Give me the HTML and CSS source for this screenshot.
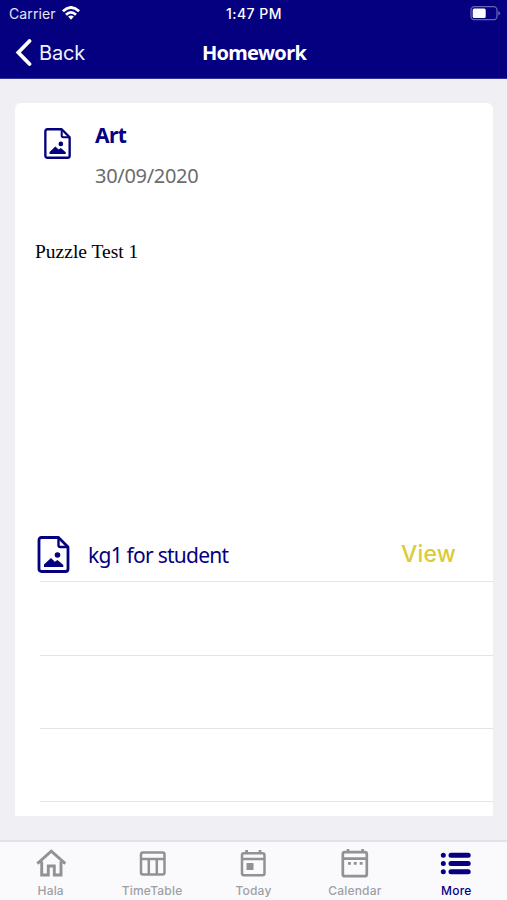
FILE: index.html
```html
<!DOCTYPE html>
<html lang="en">
<head>
<meta charset="utf-8">
<title>Homework</title>
<link rel="stylesheet" href="styles.css">
</head>
<body>
<svg class="defs" width="0" height="0">
  <symbol id="picture-file" viewBox="0 0 32 37">
    <path d="M4 1.5H21L30.5 11V33Q30.5 35.5 28 35.5H4Q1.5 35.5 1.5 33V4Q1.5 1.5 4 1.5Z" fill="none" stroke="currentColor" stroke-width="2.8" stroke-linejoin="round"/>
    <path d="M21 2V9Q21 11 23 11H30" fill="none" stroke="currentColor" stroke-width="2.4"/>
    <circle cx="20" cy="19" r="2.8" fill="currentColor"/>
    <path d="M6.5 31V28.5L13.5 22L17.3 25.8L20 24L25.8 29V31Z" fill="currentColor"/>
  </symbol>
</svg>
<header class="header">
  <div class="status">
    <div class="carrier"><span>Carrier</span>
      <svg width="18" height="14" viewBox="0 0 18 14" fill="none" stroke="#fff" stroke-width="2.8"><path d="M.9 5.2Q9-2.3 17.1 5.2M4 8.7Q9 4 14 8.7"/><path d="M6.1 10.6Q9 8.2 11.9 10.6L9 13.7Z" fill="#fff" stroke="none"/></svg>
    </div>
    <span class="time">1:47 PM</span>
    <svg class="battery" width="31" height="15" viewBox="0 0 31 15"><rect x="1" y=".7" width="26" height="13" rx="3.5" fill="none" stroke="#6563b5" stroke-width="1.3"/><rect x="2.7" y="2.6" width="13" height="9.3" rx="1.5" fill="#fff"/><path d="M28.3 5Q32 7.2 28.3 9.5Z" fill="#6563b5"/></svg>
  </div>
  <nav class="navbar">
    <a class="back"><svg width="17" height="27" viewBox="0 0 17 27"><path d="M14.5 2L3.3 13.5L14.5 25" fill="none" stroke="#fff" stroke-width="3.8" stroke-linecap="round"/></svg><span>Back</span></a>
    <h1>Homework</h1>
    <span></span>
  </nav>
</header>
<main class="content">
  <article class="card">
    <div class="subject">
      <svg class="subject-icon"><use href="#picture-file"/></svg>
      <div><h2>Art</h2><time>30/09/2020</time></div>
    </div>
    <div class="description">Puzzle Test 1</div>
    <div class="row attachment">
      <svg class="file-icon"><use href="#picture-file"/></svg>
      <span class="file-name">kg1 for student</span>
      <a class="view">View</a>
    </div>
    <div class="row"></div>
    <div class="row"></div>
    <div class="row"></div>
  </article>
</main>
<nav class="tabs">
  <a class="tab"><svg width="32" height="32" viewBox="0 0 32 32" fill="none" stroke="currentColor" stroke-width="2.9"><path d="M2.3 16.6L16.3 4.2L30.3 16.6M6.7 14.5V28H13.3V19H19.3V28H26V14.5"/></svg><span>Hala</span></a>
  <a class="tab"><svg width="32" height="32" viewBox="0 0 32 32" fill="none" stroke="currentColor" stroke-width="2.5"><rect x="5" y="5.5" width="23.5" height="22" rx="2"/><path d="M5 12H28M12.8 12V27M20.8 12V27"/></svg><span>TimeTable</span></a>
  <a class="tab"><svg width="32" height="32" viewBox="0 0 32 32" fill="none" stroke="currentColor" stroke-width="2.5"><rect x="5" y="6.2" width="22.5" height="22" rx="2"/><path d="M5 12H27" stroke-width="2.5"/><path d="M9.6 3V7M23 3V7" stroke-width="2.8"/><rect x="9.5" y="16" width="7" height="7" fill="currentColor" stroke="none"/></svg><span>Today</span></a>
  <a class="tab"><svg width="32" height="32" viewBox="0 0 32 32" fill="none" stroke="currentColor" stroke-width="2.7"><rect x="3.8" y="5.2" width="24" height="24" rx="2"/><path d="M4 11.6H28M9 2V6M23.6 2V6"/><path d="M9 16.4H11.9M14.8 16.4H17.7M20.7 16.4H23.6"/></svg><span>Calendar</span></a>
  <a class="tab active"><svg width="32" height="32" viewBox="0 0 32 32" fill="none" stroke="currentColor" stroke-width="5" stroke-linecap="round"><path d="M3.3 8.2H3.31M3.3 16.5H3.31M3.3 24.7H3.31M11 8.2H28.2M11 16.5H28.2M11 24.7H28.2"/></svg><span>More</span></a>
</nav>
</body>
</html>
```
FILE: styles.css
```css
* { box-sizing: border-box; }
body {
  margin: 0;
  height: 900px;
  display: flex;
  flex-direction: column;
  overflow: hidden;
  background: #efeff4;
  font-family: Inter, "Liberation Sans", sans-serif;
  color: #04007f;
}
.defs { position: absolute; }
svg { flex: none; display: block; }
h1, h2 { margin: 0; font-family: "Noto Sans", sans-serif; font-weight: 700; }
.header {
  height: 79px;
  background: #04007f;
  border-bottom: 1px solid #34319a;
  color: #fff;
}
.status {
  height: 27px;
  display: grid;
  grid-template-columns: 1fr auto 1fr;
  align-items: center;
  padding: 0 6px 0 7px;
  font-size: 14px;
  line-height: 27px;
}
.carrier { display: flex; align-items: center; gap: 6px; padding-left: 2px; color: #e6e5f5; letter-spacing: .1px; }
.carrier svg { margin-top: -1px; }
.time { font-weight: 500; letter-spacing: .5px; }
.battery { justify-self: end; }
.navbar {
  height: 51px;
  display: grid;
  grid-template-columns: 1fr auto 1fr;
  align-items: center;
  padding: 0 14px 0 15px;
}
.back { display: flex; align-items: center; gap: 7px; font-size: 20px; letter-spacing: -.2px; color: #f2f1fb; }
h1 { font-size: 20px; line-height: 30px; letter-spacing: -.7px; }
.content { height: 761px; padding: 24px 14px 0 15px; }
.card {
  height: 713px;
  background: #fff;
  border-radius: 6px 6px 0 0;
  display: flex;
  flex-direction: column;
}
.subject { display: flex; height: 128px; padding: 17px 0 0 29px; }
.subject-icon { width: 27px; height: 31px; margin: 8px 24px 0 0; }
h2 { font-size: 21px; line-height: 31px; letter-spacing: -.6px; }
.subject time { display: block; margin-top: 9px; color: #6c6c6c; font: 20px/31px "Noto Sans", sans-serif; letter-spacing: -.3px; }
.description {
  height: 278px;
  padding: 8px 20px;
  font: 19.5px/25px "Liberation Serif", serif;
  color: #000;
}
.row { height: 73px; flex: none; margin-left: 25px; border-bottom: 1px solid #e4e4e6; }
.attachment { height: 74px; margin-top: -1px; display: flex; align-items: center; padding: 19px 37px 0 0; }
.attachment + .row { height: 74px; }
.file-icon { width: 33px; height: 37px; margin-left: -3px; margin-right: 18px; }
.file-name { flex: 1; padding-top: 2px; font: 21px/30px "Noto Sans", sans-serif; letter-spacing: -.75px; }
.view { color: #dccb35; font-size: 23px; font-weight: 500; letter-spacing: .2px; }
.tabs {
  height: 60px;
  display: grid;
  grid-template-columns: repeat(5, 1fr);
  background: #fafafd;
  border-top: 2px solid #e2e2e6;
}
.tab {
  display: flex;
  flex-direction: column;
  align-items: center;
  padding-top: 5px;
  color: #929292;
  font-size: 12px;
  font-weight: 500;
  line-height: 20px;
  letter-spacing: .2px;
}
.tab span { margin-top: 2px; color: #a0a0a2; }
.tab.active, .active span { color: #04007f; }
```
